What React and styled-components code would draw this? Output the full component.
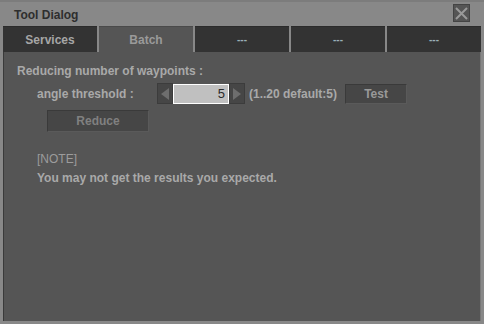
import React, { useState } from 'react';
import styled, { createGlobalStyle } from 'styled-components';

const Global = createGlobalStyle`
body{margin:0;background:#888;}
*{box-sizing:border-box;}
`

const Window = styled.div`
width:484px;
height:324px;
background:#888;
display:flex;
flex-direction:column;
padding:0 3px 3px 3px;
font-family:"Liberation Sans", Arial, sans-serif;
font-size:12px;
font-weight:bold;
`

const TitleBar = styled.div`
height:26px;
border-top:2px solid #7c7c7c;
margin:0 -3px;
padding:0 14px 0 14px;
display:flex;
align-items:center;
justify-content:space-between;
`

const Title = styled.div`
color:#2e2e2e;
line-height:14px;
padding-top:2px;
`

const CloseBtn = styled.div`
width:17px;
height:18px;
margin-bottom:2px;
background:#555;
border:1px solid #444;
display:flex;
align-items:center;
justify-content:center;
`

const TabRow = styled.div`
display:flex;
gap:2px;
height:26px;
`

const Tab = styled.div`
flex:1;
display:flex;
align-items:center;
justify-content:center;
background:${p => p.$active ? '#555' : '#333'};
border-top:1px solid ${p => p.$active ? '#4a4a4a' : '#2b2b2b'};
color:${p => p.$active ? '#9a9a9a' : (p.$dim ? '#9ab0b8' : '#a6a6a6')};
font-size:${p => p.$dim ? '10px' : '12px'};
`

const Body = styled.div`
flex:1;
background:#555;
border-left:1px solid #3a3a3a;
border-right:1px solid #777;
padding:12px 13px;
color:#a9a9a9;
line-height:14px;
`

const Row = styled.div`
display:flex;
align-items:center;
height:21px;
margin:5px 0 0 20px;
`

const Label = styled.div`
width:120px;
`

const ArrowBtn = styled.div`
width:16px;
height:21px;
background:#464646;
border:1px solid #3c3c3c;
display:flex;
align-items:center;
justify-content:center;
`

const Input = styled.input`
width:56px;
height:20px;
border:1px solid #fff;
background:#c0c0c0;
color:#2a2a2a;
text-align:right;
padding:0 3px;
font-family:"Liberation Sans", Arial, sans-serif;
font-size:13px;
outline:none;
`

const Hint = styled.div`
margin-left:4px;
`

const Button = styled.div`
width:${p => p.$w}px;
height:${p => p.$h}px;
background:#464646;
border:1px solid #3a3a3a;
border-right-color:#5a5a5a;
border-bottom-color:#5a5a5a;
display:flex;
align-items:center;
justify-content:center;
color:${p => p.$color};
margin:${p => p.$m};
`

const Note = styled.div`
margin:20px 0 0 20px;
`

const NoteHead = styled.div`
font-weight:normal;
color:#9c9c9c;
margin-bottom:5px;
`

const Arrow = ({ dir }) => (
  <svg width="8" height="12" viewBox="0 0 8 12">
    <path d={dir === 'left' ? 'M8 0 L0 6 L8 12 Z' : 'M0 0 L8 6 L0 12 Z'} fill="#6e6e6e" />
  </svg>
)

const App = () => {
  const [angle, setAngle] = useState('5');
  const tabs = ['Services', 'Batch', '---', '---', '---'];
  return (
    <>
      <Global />
      <Window>
        <TitleBar>
          <Title>Tool Dialog</Title>
          <CloseBtn>
            <svg width="13" height="13" viewBox="0 0 13 13">
              <path d="M1 1 L12 12 M12 1 L1 12" stroke="#9a9a9a" strokeWidth="2" />
            </svg>
          </CloseBtn>
        </TitleBar>
        <TabRow>
          {tabs.map((t, i) => (
            <Tab key={i} $active={i === 1} $dim={t === '---'}>{t}</Tab>
          ))}
        </TabRow>
        <Body>
          <div>Reducing number of waypoints :</div>
          <Row>
            <Label>angle threshold :</Label>
            <ArrowBtn><Arrow dir="left" /></ArrowBtn>
            <Input value={angle} onChange={e => setAngle(e.target.value)} />
            <ArrowBtn><Arrow dir="right" /></ArrowBtn>
            <Hint>(1..20 default:5)</Hint>
            <Button $w={62} $h={20} $color="#999" $m="0 0 0 8px">Test</Button>
          </Row>
          <Button $w={102} $h={22} $color="#808080" $m="6px 0 0 30px">Reduce</Button>
          <Note>
            <NoteHead>[NOTE]</NoteHead>
            <div>You may not get the results you expected.</div>
          </Note>
        </Body>
      </Window>
    </>
  );
}

export default App;
